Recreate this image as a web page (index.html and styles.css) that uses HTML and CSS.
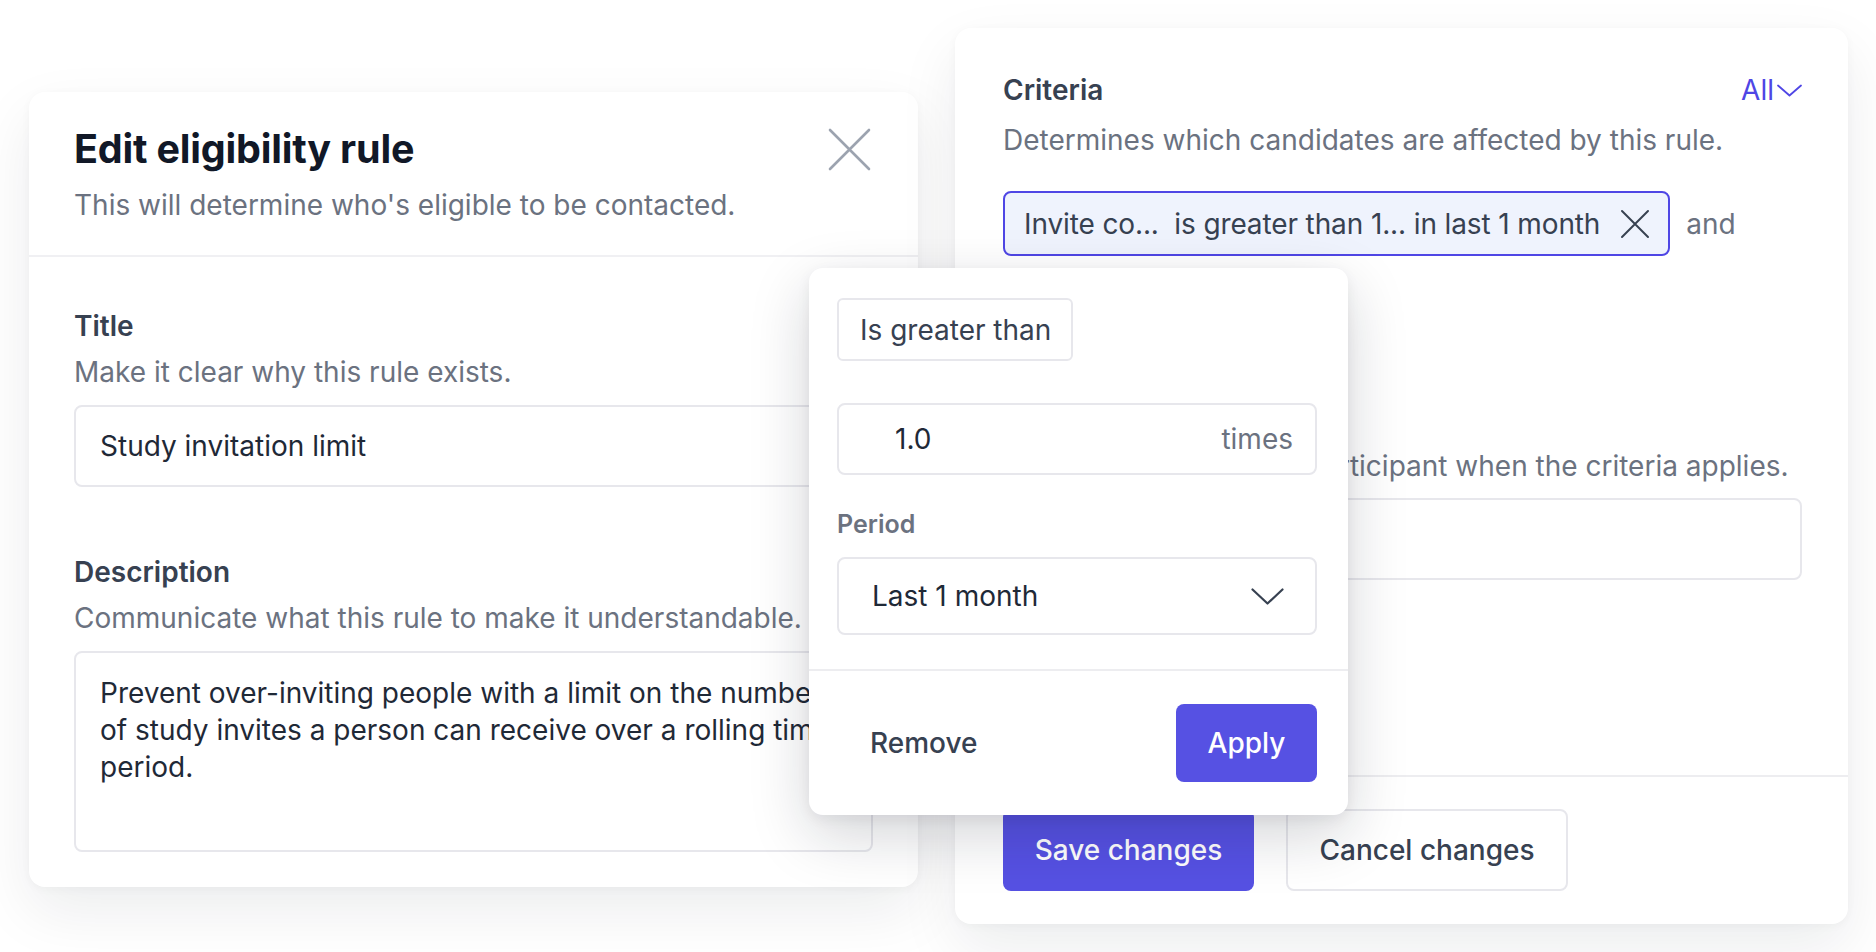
FILE: index.html
```html
<!DOCTYPE html>
<html lang="en">
<head>
<meta charset="utf-8">
<title>Edit eligibility rule</title>
<link rel="stylesheet" href="styles.css">
</head>
<body>
<div class="stage">
  <section class="card rule-card">
    <header class="rule-header">
      <div class="rule-heading">
        <h1 class="rule-title">Edit eligibility rule</h1>
        <p class="rule-sub">This will determine who's eligible to be contacted.</p>
      </div>
      <button class="close-btn" type="button" aria-label="Close">
        <svg width="43" height="43" viewBox="0 0 43 43"><path d="M2 2L41 41M41 2L2 41" stroke="#9ca3af" stroke-width="2.6" stroke-linecap="round" fill="none"/></svg>
      </button>
    </header>
    <div class="rule-body">
      <div class="field">
        <div class="field-label">Title</div>
        <p class="field-hint">Make it clear why this rule exists.</p>
        <div class="text-input">Study invitation limit</div>
      </div>
      <div class="field field-gap">
        <div class="field-label">Description</div>
        <p class="field-hint">Communicate what this rule to make it understandable.</p>
        <div class="text-area">Prevent over-inviting people with a limit on the number of study invites a person can receive over a rolling time period.</div>
      </div>
    </div>
  </section>

  <section class="card criteria-card">
    <div class="criteria-body">
      <div class="criteria-head">
        <div class="field-label">Criteria</div>
        <button class="all-btn" type="button">All<svg width="25" height="13" viewBox="0 0 25 13"><path d="M1 1.5L12.5 11.5L24 1.5" stroke="#4f46e5" stroke-width="1.8" fill="none" stroke-linecap="round" stroke-linejoin="round"/></svg></button>
      </div>
      <p class="field-hint crit-hint">Determines which candidates are affected by this rule.</p>
      <div class="chip-row">
        <div class="chip">
          <span class="chip-text">Invite co...&nbsp; is greater than 1... in last 1 month</span>
          <svg class="chip-x" width="30" height="30" viewBox="0 0 30 30"><path d="M2 2L28 28M28 2L2 28" stroke="#374151" stroke-width="2" stroke-linecap="round" fill="none"/></svg>
        </div>
        <span class="chip-and">and</span>
      </div>
      <div class="field action-field">
        <div class="field-label">Action</div>
        <p class="field-hint action-hint">Set what happens to a participant when the criteria applies.</p>
        <div class="text-input"></div>
      </div>
    </div>
    <footer class="criteria-foot">
      <button class="btn btn-primary save-btn" type="button">Save changes</button>
      <button class="btn btn-outline cancel-btn" type="button">Cancel changes</button>
    </footer>
  </section>

  <div class="popover">
    <div class="pop-body">
      <button class="op-btn" type="button">Is greater than</button>
      <div class="num-input">
        <span class="num-val">1.0</span>
        <span class="num-unit">times</span>
      </div>
      <div class="pop-label">Period</div>
      <div class="select">
        <span>Last 1 month</span>
        <svg width="33" height="17" viewBox="0 0 33 17"><path d="M1.5 1.5L16.5 15.5L31.5 1.5" stroke="#374151" stroke-width="2.2" fill="none" stroke-linecap="round" stroke-linejoin="round"/></svg>
      </div>
    </div>
    <div class="pop-foot">
      <button class="btn btn-ghost" type="button">Remove</button>
      <button class="btn btn-primary apply-btn" type="button">Apply</button>
    </div>
  </div>
</div>
</body>
</html>
```

FILE: styles.css
```css
* { box-sizing: border-box; }

html, body {
  margin: 0;
  padding: 0;
  background: #ffffff;
  font-family: Inter, "Noto Sans", "Liberation Sans", sans-serif;
  color: #374151;
}

button {
  font-family: inherit;
  border: none;
  background: none;
  padding: 0;
  margin: 0;
  cursor: pointer;
}

p { margin: 0; }

.stage {
  position: relative;
  width: 1876px;
  height: 952px;
  overflow: hidden;
  display: flex;
  align-items: flex-start;
  gap: 37px;
  padding-left: 29px;
}

.card {
  background: #ffffff;
  border-radius: 16px;
  box-shadow: 0 24px 60px rgba(17, 24, 39, 0.08), 0 2px 10px rgba(17, 24, 39, 0.035);
}

/* Left card */
.rule-card {
  width: 889px;
  margin-top: 92px;
}

.rule-header {
  display: flex;
  justify-content: space-between;
  align-items: flex-start;
  padding: 39px 47px 32px 45px;
  border-bottom: 2px solid #f0f0f3;
}

.close-btn {
  width: 43px;
  height: 43px;
  display: flex;
  margin-top: -3px;
}

.rule-title {
  margin: 0;
  font-size: 39.5px;
  line-height: 36px;
  font-weight: 700;
  color: #111827;
  letter-spacing: -0.2px;
}

.rule-sub {
  margin-top: 20px;
  font-size: 28px;
  line-height: 36px;
  color: #6b7280;
}

.rule-body {
  padding: 51px 45px 35px;
}

.field-label {
  font-size: 28px;
  line-height: 36px;
  font-weight: 600;
  color: #374151;
}

.field-hint {
  margin-top: 10px;
  font-size: 28px;
  line-height: 36px;
  color: #6b7280;
}

.text-input {
  margin-top: 15px;
  height: 82px;
  border: 2px solid #e7e7ec;
  border-radius: 8px;
  padding: 0 24px;
  display: flex;
  align-items: center;
  font-size: 28px;
  color: #1f2937;
}

.field-gap { margin-top: 67px; }

.text-area {
  margin-top: 15px;
  height: 201px;
  border: 2px solid #e7e7ec;
  border-radius: 8px;
  padding: 22px 24px;
  font-size: 28px;
  line-height: 37px;
  color: #1f2937;
}

/* Right card */
.criteria-card {
  width: 893px;
  height: 896px;
  margin-top: 28px;
  display: flex;
  flex-direction: column;
}

.criteria-body {
  flex: 1;
  padding: 44px 46px 0 48px;
}

.criteria-head {
  display: flex;
  justify-content: space-between;
  align-items: center;
}

.all-btn {
  display: flex;
  align-items: center;
  gap: 3px;
  font-size: 28px;
  line-height: 36px;
  color: #4f46e5;
}

.crit-hint { margin-top: 14px; }

.chip-row {
  margin-top: 33px;
  display: flex;
  align-items: center;
}

.chip {
  height: 65px;
  display: inline-flex;
  align-items: center;
  gap: 20px;
  padding: 0 18px 0 19px;
  border: 2px solid #4f46e5;
  border-radius: 8px;
  background: #eff3fd;
}

.chip-text {
  font-size: 28px;
  letter-spacing: -0.12px;
  color: #374151;
  white-space: nowrap;
}

.chip-and {
  margin-left: 16px;
  font-size: 28px;
  color: #6b7280;
}

.action-field { margin-top: 146px; }
.action-hint { white-space: nowrap; }
.action-field .field-hint { margin-top: 10px; }
.action-field .text-input { margin-top: 14px; }

.criteria-foot {
  border-top: 2px solid #ededf0;
  padding: 32px 48px 33px;
  display: flex;
  gap: 32px;
}

.btn {
  height: 82px;
  border-radius: 8px;
  font-size: 28px;
  font-weight: 500;
  display: inline-flex;
  align-items: center;
  justify-content: center;
}

.btn-primary {
  background: #5651e3;
  color: #ffffff;
}

.btn-outline {
  border: 2px solid #e7e7ec;
  color: #374151;
  background: #ffffff;
}

.save-btn { width: 251px; }
.cancel-btn { width: 282px; }

/* Popover */
.popover {
  position: absolute;
  left: 809px;
  top: 268px;
  width: 539px;
  height: 547px;
  background: #ffffff;
  border-radius: 14px;
  box-shadow: 0 20px 60px rgba(17, 24, 39, 0.18), 0 4px 14px rgba(17, 24, 39, 0.06);
  display: flex;
  flex-direction: column;
}

.pop-body {
  padding: 30px 31px 34px 28px;
}

.op-btn {
  height: 63px;
  border: 2px solid #e7e7ec;
  border-radius: 6px;
  font-size: 28px;
  color: #374151;
  padding: 0 20px 0 21px;
  display: flex;
  align-items: center;
}

.num-input {
  margin-top: 42px;
  height: 72px;
  border: 2px solid #e7e7ec;
  border-radius: 8px;
  display: flex;
  align-items: center;
  justify-content: space-between;
  padding: 0 22px 0 56px;
  font-size: 28px;
}

.num-val { color: #1f2937; }
.num-unit { color: #6b7280; }

.pop-label {
  margin-top: 35px;
  font-size: 25px;
  line-height: 28px;
  font-weight: 600;
  color: #6b7280;
}

.select {
  margin-top: 19px;
  height: 78px;
  border: 2px solid #e7e7ec;
  border-radius: 8px;
  display: flex;
  align-items: center;
  justify-content: space-between;
  padding: 0 31px 0 33px;
  font-size: 28px;
  color: #1f2937;
}

.pop-foot {
  border-top: 2px solid #ededf0;
  padding: 33px 31px 33px 28px;
  display: flex;
  justify-content: space-between;
  align-items: center;
}

.btn-ghost {
  height: 78px;
  padding: 0 33px;
  color: #374151;
}

.apply-btn {
  width: 141px;
  height: 78px;
}
```
